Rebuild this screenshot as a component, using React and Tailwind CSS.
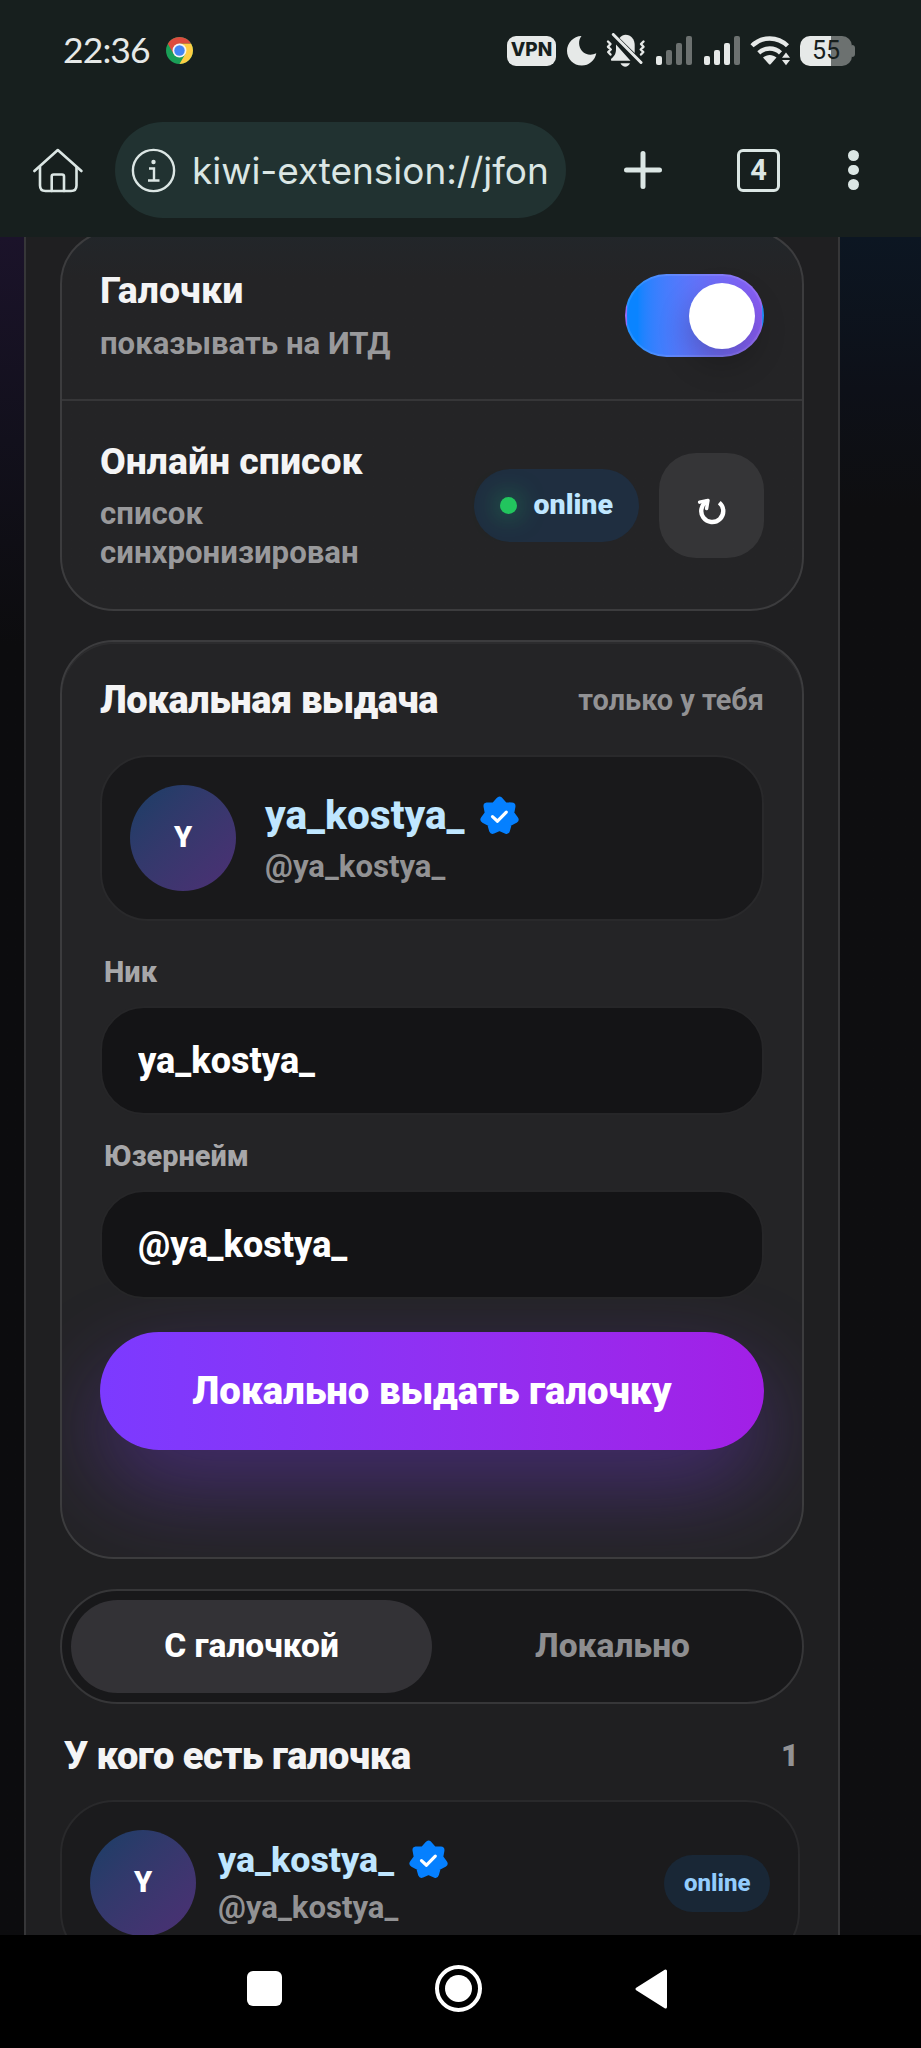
import { useState } from "react";
import clsx from "clsx";

const BADGE_POINTS = Array.from({ length: 14 }, (_, i) => {
  const radius = i % 2 === 0 ? 15.7 : 11.2;
  const angle = (Math.PI / 7) * i - Math.PI / 2;
  return `${(19.5 + radius * Math.cos(angle)).toFixed(2)},${(20 + radius * Math.sin(angle)).toFixed(2)}`;
}).join(" ");

const VerifiedBadge = () => (
  <svg className="w-[39px] h-[39px] shrink-0" viewBox="0 0 39 39">
    <polygon points={BADGE_POINTS} fill="#0580ff" stroke="#0580ff" strokeWidth="7.4" strokeLinejoin="round" />
    <path d="M12.5 20.6l5 4.6 8.8-9" fill="none" stroke="#fff" strokeWidth="3.2" strokeLinecap="round" strokeLinejoin="round" />
  </svg>
);

const ChromeIcon = () => (
  <svg className="w-[27px] h-[27px]" viewBox="-40 -40 80 80">
    <circle r="40" fill="#1a9f57" />
    <path d="M0 -20L-17.3 10L-34.6 -20A40 40 0 0 1 34.6 -20Z" fill="#dd4b3e" />
    <path d="M0 -20H34.6A40 40 0 0 1 0 40L17.3 10Z" fill="#ffce44" />
    <circle r="20.5" fill="#f4f4f4" />
    <circle r="15.5" fill="#4385f4" />
  </svg>
);

const Signal = ({ level }) => (
  <div className="flex items-end gap-1 h-[29px]">
    <span className="w-[6px] h-[9px] rounded-[2px] bg-[#e6e9e8]" />
    <span className={clsx("w-[6px] h-[15px] rounded-[2px]", level > 1 ? "bg-[#e6e9e8]" : "bg-[#6c7170]")} />
    <span className={clsx("w-[6px] h-[22px] rounded-[2px]", level > 2 ? "bg-[#e6e9e8]" : "bg-[#6c7170]")} />
    <span className="w-[6px] h-[29px] rounded-[2px] bg-[#6c7170]" />
  </div>
);

const StatusBar = () => (
  <div className="flex items-center h-[103px] pl-[63px] pr-[66px] pb-[2px] text-[#e6e9e8]">
    <span className="pb-[2px] font-['Lato'] text-[35.5px] leading-none tracking-[-0.9px]">22:36</span>
    <div className="ml-[16px]">
      <ChromeIcon />
    </div>
    <div className="flex items-center ml-auto">
      <span className="flex items-center justify-center w-[49px] h-[30px] rounded-[9px] bg-[#e6e9e8] text-[#171f1e] font-['Inter'] font-extrabold text-[19px]">
        VPN
      </span>
      <svg className="w-[31px] h-[31px] ml-[10px]" viewBox="0 0 31 31" fill="currentColor">
        <path d="M15.5 1C12 5 12.5 12 16 16C20 20.5 26 20.5 30.3 18.3C29 25.5 23 30.6 15.8 30.6C7.5 30.6 1 24 1 15.8C1 8 7.5 1 15.5 1Z" />
      </svg>
      <svg className="w-[40px] h-[36px] ml-[9px]" viewBox="0 0 40 36" fill="currentColor">
        <path d="M13.5 5C15.5 2.5 17.5 1.7 19.5 1.7C25 1.7 28.7 6 28.7 12V20Z" />
        <path d="M10 11.5L24.5 27.7H5.5C4.7 27.5 4.8 26.3 5.5 25.6C9 22.5 10 20 10 16Z" />
        <path d="M14.5 30.2H24C23 32.5 21 33.7 19.3 33.7C17.5 33.7 15.5 32.5 14.5 30.2Z" />
        <g fill="none" stroke="currentColor" strokeLinecap="round" strokeLinejoin="round">
          <path d="M7.3 1.5L35 29.5" strokeWidth="3" />
          <path d="M2 8.5L4.5 11L2 13.8L4.8 16.5L2.2 19L4.5 21.5" strokeWidth="2.4" />
          <path d="M37.5 8.5L35 11L37.5 13.8L34.7 16.5L37.3 19L35 21.5" strokeWidth="2.4" />
        </g>
      </svg>
      <div className="ml-[10px]">
        <Signal level={1} />
      </div>
      <div className="ml-[12px]">
        <Signal level={3} />
      </div>
      <svg className="w-[41px] h-[31px] ml-[10px]" viewBox="0 0 41 31">
        <g fill="none" stroke="currentColor" strokeWidth="4.4">
          <path d="M2 10.8C12 1 27.5 1 37.5 10.8" />
          <path d="M8.8 17.8C15 12 24.5 12 30.5 17.8" />
        </g>
        <path d="M13 22.5C17 19 22.5 19 26.5 22.5L20.8 29C20 29.7 19.5 29.7 18.8 29Z" fill="currentColor" />
        <path d="M32 22.7L36 17.5L40 22.7ZM32 25L36 30.2L40 25Z" fill="currentColor" />
      </svg>
      <div className="flex items-center ml-[9px]">
        <div className="flex items-center justify-center w-[52px] h-[30px] rounded-[10px] bg-linear-to-r from-[#e6e9e8] from-60% to-[#6c7170] to-60% text-[#171f1e] font-['Roboto'] text-[25px]">
          55
        </div>
        <span className="w-[3px] h-[12px] rounded-r-[3px] bg-[#6c7170]" />
      </div>
    </div>
  </div>
);

const Toolbar = () => (
  <div className="flex items-center h-[134px] pl-[33px] text-[#dbe6e4]">
    <svg className="w-[50px] h-[45px]" viewBox="0 0 50 45" fill="none" stroke="currentColor" strokeWidth="2.6" strokeLinecap="round" strokeLinejoin="round">
      <path d="M1.4 23L24.8 2L48.4 23" />
      <path d="M7 19V37.5C7 41 9 43 12.5 43H38C41.5 43 43.5 41 43.5 37.5V19" />
      <path d="M18.7 43V28.5C18.7 27.3 19.5 26.5 20.7 26.5H29C30.2 26.5 31 27.3 31 28.5V43" />
    </svg>
    <div className="flex items-center w-[451px] h-[96px] ml-8 pl-[16px] rounded-full bg-[#213231]">
      <svg className="w-[45px] h-[45px] shrink-0" viewBox="0 0 45 45" fill="none" stroke="currentColor">
        <circle cx="22.5" cy="22.5" r="20.6" strokeWidth="2.4" />
        <path d="M18 20.5H23V32.5M17 32.5H28.5" strokeWidth="2.4" />
        <circle cx="22.5" cy="14" r="2.2" fill="currentColor" stroke="none" />
      </svg>
      <span className="w-[355px] ml-[16px] pt-[2px] overflow-hidden whitespace-nowrap font-['Inter'] text-[37px] tracking-[-0.05px]">
        kiwi-extension://jfon
      </span>
    </div>
    <svg className="w-[40px] h-[40px] ml-[57px]" viewBox="0 0 40 40" stroke="currentColor" strokeWidth="5" strokeLinecap="round">
      <path d="M20 3.5V36.5M3.500 20H36.5" />
    </svg>
    <span className="flex items-center justify-center w-[43px] h-[43px] ml-[74px] rounded-[6px] border-[3px] border-current font-['Roboto'] font-bold text-[29px] leading-none">
      4
    </span>
    <div className="flex flex-col gap-[4px] ml-[68px]">
      <span className="size-[10.5px] rounded-full bg-current" />
      <span className="size-[10.5px] rounded-full bg-current" />
      <span className="size-[10.5px] rounded-full bg-current" />
    </div>
  </div>
);

const Avatar = ({ letter }) => (
  <div className="flex items-center justify-center shrink-0 size-[106px] rounded-full bg-linear-135 from-[#173e66] to-[#4c2f74] text-white text-[29px] font-black">
    {letter}
  </div>
);

const Toggle = ({ checked, onChange }) => (
  <button
    onClick={() => onChange(!checked)}
    className={clsx(
      "flex items-center shrink-0 w-[139px] h-[83px] px-[7px] rounded-full border-2 border-white/10",
      checked ? "justify-end bg-linear-to-r from-[#0a84ff] from-8% to-[#8b5cf6]" : "bg-[#39393b]"
    )}
  >
    <span className="size-[66px] rounded-full bg-white shadow-[0_14px_32px_rgba(0,0,0,0.24)]" />
  </button>
);

const Field = ({ label, value, onChange }) => (
  <label className="block">
    <span className="block pl-1 text-[28.9px] leading-[34px] font-extrabold text-[#a7a7a9]">{label}</span>
    <input
      value={value}
      onChange={(e) => onChange(e.target.value)}
      className="block w-full h-[109px] mt-[17px] px-9 rounded-[44px] border-2 border-[#262628] bg-[#141416] text-[36px] leading-[42px] font-extrabold text-white outline-none"
    />
  </label>
);

const App = () => {
  const [enabled, setEnabled] = useState(true);
  const [nick, setNick] = useState("ya_kostya_");
  const [username, setUsername] = useState("@ya_kostya_");
  const [tab, setTab] = useState("verified");

  return (
    <div className="flex flex-col w-[921px] h-[2048px] overflow-hidden bg-black font-['Roboto',sans-serif]">
      <header className="h-[237px] shrink-0 bg-[#171f1e]">
        <StatusBar />
        <Toolbar />
      </header>

      <main className="flex h-[1698px] shrink-0 overflow-hidden bg-[#0d0d0f]">
        <div className="w-6 shrink-0 bg-linear-to-b from-[#1b132a] via-[#12101c] via-12% to-[#0c0c0e] to-24%" />

        <div className="w-[816px] shrink-0 px-[34px] border-x-2 border-[#363638] bg-[#1f1f21]">
          <section className="-mt-[7px] rounded-[54px] border-2 border-[#3c3c3e] bg-linear-to-b from-[#22262a] to-[#242426] to-12%">
            <div className="flex items-center justify-between h-[167px] px-[38px]">
              <div>
                <h2 className="text-[37.5px] leading-[44px] font-extrabold text-[#f4f4f5]">Галочки</h2>
                <p className="mt-3 text-[31.1px] leading-[39px] font-bold text-[#99999b]">показывать на ИТД</p>
              </div>
              <Toggle checked={enabled} onChange={setEnabled} />
            </div>
            <div className="flex items-center h-[210px] px-[38px] gap-5 border-t-2 border-[#363638]">
              <div className="flex-1 min-w-0">
                <h2 className="text-[37.4px] leading-[44px] font-extrabold text-[#f4f4f5]">Онлайн список</h2>
                <p className="mt-[11px] text-[31.2px] leading-[39px] font-bold text-[#99999b]">список синхронизирован</p>
              </div>
              <span className="flex items-center h-[73px] px-[26px] gap-[17px] rounded-full bg-[#1f2e40] text-[28.5px] font-black text-[#bfe6ff]">
                <span className="size-[17px] rounded-full bg-[#22c55e] shadow-[0_0_26px_rgba(34,197,94,0.7)]" />
                online
              </span>
              <button className="flex items-center justify-center size-[105px] rounded-[37px] bg-[#353537]">
                <svg className="w-[30px] h-[30px] mt-[13px]" viewBox="0 0 30 30" fill="none" stroke="#fff">
                  <path d="M22.3 5.6A11 11 0 1 1 10 4.4" strokeWidth="4.4" />
                  <path d="M2.6 5.2L11 3.4L9.6 11.6" strokeWidth="3.4" strokeLinecap="round" strokeLinejoin="round" />
                </svg>
              </button>
            </div>
          </section>

          <section className="h-[919px] mt-[29px] px-[38px] pt-9 overflow-hidden rounded-[54px] border-2 border-[#3c3c3e] bg-[#242426] shadow-[inset_0_2px_0_rgba(255,255,255,0.04)]">
            <div className="flex items-center justify-between">
              <h2 className="pt-px text-[38px] leading-[43px] font-black tracking-[-0.45px] text-[#f4f4f5]">Локальная выдача</h2>
              <span className="text-[28.9px] leading-[34px] font-bold text-[#929294]">только у тебя</span>
            </div>

            <div className="flex items-center h-[166px] mt-[33px] px-7 gap-[29px] rounded-[48px] border-2 border-[#29292b] bg-[#19191b]">
              <Avatar letter="Y" />
              <div>
                <div className="flex items-center gap-[15px]">
                  <span className="text-[40.6px] leading-[48px] font-extrabold text-[#bfe6ff]">{nick}</span>
                  <VerifiedBadge />
                </div>
                <p className="mt-[10px] text-[31.1px] leading-9 font-bold text-[#929294]">{username}</p>
              </div>
            </div>

            <div className="flex flex-col gap-6 mt-[34px]">
              <Field label="Ник" value={nick} onChange={setNick} />
              <Field label="Юзернейм" value={username} onChange={setUsername} />
            </div>

            <button className="block w-full h-[118px] mt-[33px] rounded-full bg-linear-to-r from-[#7c3aff] to-[#a21fe6] text-white text-[38.3px] font-black shadow-[0_37px_90px_rgba(124,58,237,0.36)]">
              Локально выдать галочку
            </button>
          </section>

          <div className="grid grid-cols-2 h-[115px] mt-[30px] p-[9px] rounded-full border-2 border-[#363638] bg-[#18181a] text-[33.5px] font-extrabold">
            <button
              onClick={() => setTab("verified")}
              className={clsx("rounded-full", tab === "verified" ? "bg-[#333236] text-white" : "text-[#8e8e90]")}
            >
              С галочкой
            </button>
            <button
              onClick={() => setTab("local")}
              className={clsx("rounded-full", tab === "local" ? "bg-[#333236] text-white" : "text-[#8e8e90]")}
            >
              Локально
            </button>
          </div>

          <div className="flex items-center justify-between mt-[30px] pl-1 pr-[5px]">
            <h2 className="text-[38px] leading-[44px] font-black tracking-[-0.45px] text-[#f4f4f5]">У кого есть галочка</h2>
            <span className="text-[31px] leading-[44px] font-black text-[#929294]">1</span>
          </div>

          <div className="flex items-center h-[166px] mt-[22px] mr-1 px-7 gap-[22px] rounded-[54px] border-2 border-[#29292b] bg-[#1b1b1d]">
            <Avatar letter="Y" />
            <div className="pb-[2px]">
              <div className="flex items-center gap-[15px]">
                <span className="text-[35.8px] leading-[42px] font-extrabold text-[#bfe6ff]">ya_kostya_</span>
                <VerifiedBadge />
              </div>
              <p className="mt-[9px] text-[31.1px] leading-9 font-bold text-[#929294]">@ya_kostya_</p>
            </div>
            <span className="flex items-center h-[57px] ml-auto px-[19.5px] rounded-full bg-[#192736] text-[24px] font-extrabold text-[#93cdfd]">
              online
            </span>
          </div>
        </div>

        <div className="flex-1 bg-linear-to-b from-[#0c1622] via-[#0d1018] via-9% to-[#0e0e10] to-16%" />
      </main>

      <nav className="flex items-center h-[113px] pl-[247px] pb-[6px] gap-[153px]">
        <span className="size-[35px] rounded-[6px] bg-white" />
        <span className="flex items-center justify-center size-[47px] rounded-full border-[4.5px] border-white">
          <span className="size-[27px] rounded-full bg-white" />
        </span>
        <svg className="w-[32px] h-[40px]" viewBox="0 0 32 40">
          <path d="M2 20L30.5 2V38Z" fill="#fff" stroke="#fff" strokeWidth="3" strokeLinejoin="round" />
        </svg>
      </nav>
    </div>
  );
};

export default App;
